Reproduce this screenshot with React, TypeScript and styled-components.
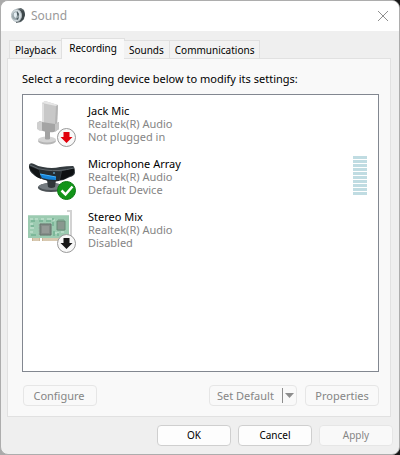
import React from "react";
import styled, { createGlobalStyle } from "styled-components";

const GlobalStyle = createGlobalStyle`
  * { box-sizing: border-box; }
  html, body, #root { height: 100%; }
  body {
    margin: 0;
    background: linear-gradient(90deg, #aaaaaa 0 90%, #181818 98%);
    font-family: "Noto Sans", "Open Sans", sans-serif;
    font-size: 11px;
    line-height: 13px;
    color: #000;
  }
  button { font: inherit; color: inherit; }
`;

const Dialog = styled.main`
  display: flex;
  flex-direction: column;
  min-height: 100%;
  border: 1px solid #adadad;
  border-radius: 8px;
  background: #efefef;
  overflow: hidden;
`;

const TitleBar = styled.header`
  display: flex;
  align-items: center;
  height: 30px;
  padding: 0 8px 0 10px;
  background: #fff;
`;

const Title = styled.h1`
  flex: 1;
  margin: 0 0 0 6px;
  font-size: 12px;
  line-height: 16px;
  font-weight: 400;
  color: #999;
`;

const CloseButton = styled.button`
  display: flex;
  padding: 2px;
  border: 0;
  background: none;
`;

const Content = styled.div`
  flex: 1;
  display: flex;
  flex-direction: column;
  padding: 7px 8px 0 6px;
`;

const TabList = styled.div`
  display: flex;
  align-items: flex-end;
  padding-left: 2px;
`;

const Tab = styled.button<{ $active?: boolean }>`
  position: relative;
  height: ${(p) => (p.$active ? 21 : 18)}px;
  margin: ${(p) => (p.$active ? "0 -1px -1px" : "0")};
  padding: ${(p) => (p.$active ? "0 7px 2px" : "1px 5px 0")};
  border: 1px solid #e0e0e0;
  border-bottom: 0;
  border-left-width: ${(p) => (p.$active ? 1 : 0)}px;
  background: ${(p) => (p.$active ? "#f9f9f9" : "#f2f2f2")};
  font-size: 10px;
  white-space: nowrap;
  &:first-child { border-left-width: 1px; }
`;

const Panel = styled.section`
  flex: 1;
  display: flex;
  flex-direction: column;
  padding: 13px 11px 10px 14px;
  border: 1px solid #e1e1e1;
  background: #f9f9f9;
`;

const Prompt = styled.p`
  margin: 0 0 9px;
`;

const DeviceList = styled.ul`
  flex: 1;
  margin: 0;
  padding: 5px 11px 5px 5px;
  border: 1px solid #828790;
  background: #fff;
  list-style: none;
`;

const Device = styled.li`
  display: flex;
  align-items: flex-start;
  gap: 12px;
  height: 53px;
`;

const DeviceText = styled.div`
  flex: 1;
  padding-top: 4px;
`;

const DeviceName = styled.div`
  color: #000;
`;

const DeviceDetail = styled.div`
  color: #858585;
`;

const Meter = styled.div`
  display: grid;
  gap: 1px;
  width: 14px;
  margin-top: 3px;
`;

const MeterBar = styled.span`
  height: 3px;
  background: #c0dce2;
`;

const Actions = styled.div`
  display: flex;
  gap: 8px;
  padding: 13px 0 0 1px;
`;

const Spacer = styled.span`
  flex: 1;
`;

const Button = styled.button`
  width: 74px;
  height: 21px;
  padding: 0;
  border: 1px solid #cfcfcf;
  border-radius: 4px;
  background: #fdfdfd;
  &:disabled {
    border-color: #e6e6e6;
    background: #f9f9f9;
    color: #858585;
  }
`;

const ConfigureButton = styled(Button)`
  padding-right: 2px;
`;

const SplitButton = styled(Button)`
  display: flex;
  align-items: center;
  justify-content: space-between;
  width: 88px;
  padding: 0 2px 0 7px;
`;

const FooterButton = styled(Button)`
  font-size: 10px;
`;

const Footer = styled.footer`
  display: flex;
  justify-content: flex-end;
  gap: 7px;
  padding: 8px 6px;
`;

const SpeakerIcon = () => (
  <svg width="14" height="16" viewBox="0 0 14 16" aria-hidden="true">
    <path d="M5 1 10 0l3 2 1 4-1 5-3 3-5 1z" fill="#5c666a" />
    <path d="M9 2q4 4 0 11l3-1 2-5-1-4z" fill="#3d474a" />
    <ellipse cx="5.500" cy="7.500" rx="5" ry="6" fill="#d6dfe3" stroke="#b2bcc0" />
    <path d="M3 4q4-2 5 2 1 4-3 6Q1 12 1 8q0-3 2-4" fill="#9aa7ac" />
    <path d="M3 5q3-2 3 2l-1 3Q2 9 3 5" fill="#e3edf2" />
    <path d="m6 3 2 3-1 3-1-3zM5 11l3-2-1 3z" fill="#4b5a60" />
  </svg>
);

const DeviceSvg = ({ children }: { children: React.ReactNode }) => (
  <svg width="48" height="51" viewBox="0 -3 48 51" aria-hidden="true">{children}</svg>
);

const Badge = ({ kind }: { kind: "down" | "check" | "off" }) =>
  kind === "check" ? (
    <g>
      <circle cx="38.500" cy="34.500" r="9" fill="#129419" stroke="#0b7a12" />
      <path d="m33.500 34.500 4 4 7-8" fill="none" stroke="#fff" strokeWidth="2.500" />
    </g>
  ) : (
    <g>
      <circle cx="38.500" cy="34.500" r="9" fill="#f8f8f8" stroke="#999" />
      <path d="M35.500 29h6v5h3l-6 6-6-6h3z" fill={kind === "down" ? "#e1000b" : "#171717"} />
    </g>
  );

const JackMicIcon = () => (
  <DeviceSvg>
    <ellipse cx="19" cy="38" rx="9" ry="3.500" fill="#b5b5b5" />
    <ellipse cx="19" cy="36.500" rx="9" ry="3" fill="#d4d4d4" />
    <path d="M17 28h5v8q-3 1-5 0z" fill="#a2a2a2" />
    <path d="m14 0 3-2 13 4-1 20-15-2z" fill="#c8c8c8" />
    <path d="m14 0 3-2 13 4-2 1z" fill="#e6e6e6" />
    <path d="m14 0 2 1v19h-2z" fill="#e0e0e0" />
    <path d="m28 3 2-1-1 20-2-1z" fill="#b4b4b4" />
    <path d="m9 20 3-2 2 1 13 2 4-2v7l-5 3q-7 1-14-2l-3-3z" fill="#a4a4a4" />
    <path d="m9 20 3-2 2 1v8l-2 1-3-2z" fill="#cfcfcf" />
    <path d="m27 21 4-2v7l-4 3z" fill="#c4c4c4" />
    <Badge kind="down" />
  </DeviceSvg>
);

const MicArrayIcon = () => (
  <DeviceSvg>
    <ellipse cx="23" cy="31.500" rx="13" ry="4.500" fill="#4c5256" />
    <ellipse cx="23" cy="30.500" rx="12" ry="3.500" fill="#747b80" />
    <path d="M19 24h9l-1 7q-4 2-7 0z" fill="#30363a" />
    <path d="M1 9q1-3 5-1 5 3 9 3 9 2 17 0 7-1 13-1 2 1 2 7-1 3-5 4-5 3-12 4-9 1-16-2Q5 20 2 15q-1-3-1-6" fill="#343b3f" />
    <path d="m1 10 10 4 2 9q-5-2-8-6-4-4-4-7" fill="#111416" />
    <path d="m34 15 12-3q1 7-4 8-4 3-10 4z" fill="#0d1012" />
    <path d="m11 13 22 3-2 9q-9 1-17-2z" fill="#252c31" />
    <path d="m12 18 16 3v3q-8 0-14-2z" fill="#1683d8" />
    <path d="m12 18 16 3" stroke="#44b5ff" />
    <path d="M2 9q9 5 16 5 12 2 28-2" fill="none" stroke="#626a70" />
    <path d="M25 17h2" stroke="#74c5f8" />
    <Badge kind="check" />
  </DeviceSvg>
);

const SoundCardIcon = () => (
  <DeviceSvg>
    <path d="M39 2h4v31" fill="none" stroke="#d2d2d2" strokeWidth="2" />
    <path d="M0 6h41v21l-4 2H0z" fill="#9ccbb1" />
    <path d="M0 6h41v1H0z" fill="#b4d7c4" />
    <path d="M4 29h8v3H4zm10 0h20v3H14z" fill="#c9b597" />
    <path d="M6 29v3m2-3v3m2-3v3m6-3v3m2-3v3m2-3v3m2-3v3m2-3v3m2-3v3m2-3v3m2-3v3" stroke="#e6dcc9" />
    <path d="M10 16h14M10 19h14M10 22h14M10 25h14M13 14v13M16 14v13M19 14v13M22 14v13" stroke="#a2b5ab" />
    <path d="M12 15h11v11H12z" fill="#858c88" stroke="#65756c" />
    <path d="M14 17h7v7h-7z" fill="#949a96" />
    <path d="M29 12h8v9h-8z" fill="#89988f" stroke="#688a76" />
    <path d="M31 10v12m2-12v12m2-12v12" stroke="#789c87" strokeDasharray="2 8" />
    <path d="M2 10h3m2 0h3m3 0h3m3 0h5M2 15h3m-3 4h4m-4 4h3m22 1h4m2-1h3M25 11h2" stroke="#d0eadb" />
    <path d="M3 12h4m4 0h4m3 0h5M3 17h3m-3 9h5m17-13v4m1 5v5m4-3v3M25 9v2" stroke="#5fa482" />
    <Badge kind="off" />
  </DeviceSvg>
);

const devices = [
  { name: "Jack Mic", status: "Not plugged in", Icon: JackMicIcon },
  { name: "Microphone Array", status: "Default Device", Icon: MicArrayIcon, meter: true },
  { name: "Stereo Mix", status: "Disabled", Icon: SoundCardIcon },
];
const tabs = ["Playback", "Recording", "Sounds", "Communications"];

export default function App() {
  return (
    <>
      <GlobalStyle />
      <Dialog role="dialog" aria-labelledby="title">
        <TitleBar>
          <SpeakerIcon />
          <Title id="title">Sound</Title>
          <CloseButton aria-label="Close">
            <svg width="12" height="12" viewBox="0 0 12 12" aria-hidden="true">
              <path d="m1 1 10 10M11 1 1 11" stroke="#8f8f8f" />
            </svg>
          </CloseButton>
        </TitleBar>
        <Content>
          <TabList role="tablist">
            {tabs.map((tab) => (
              <Tab key={tab} role="tab" $active={tab === "Recording"} aria-selected={tab === "Recording"}>{tab}</Tab>
            ))}
          </TabList>
          <Panel role="tabpanel" aria-label="Recording">
            <Prompt>Select a recording device below to modify its settings:</Prompt>
            <DeviceList>
              {devices.map(({ name, status, Icon, meter }) => (
                <Device key={name}>
                  <Icon />
                  <DeviceText>
                    <DeviceName>{name}</DeviceName>
                    <DeviceDetail>Realtek(R) Audio</DeviceDetail>
                    <DeviceDetail>{status}</DeviceDetail>
                  </DeviceText>
                  {meter && (
                    <Meter role="img" aria-label="Input level">
                      {Array.from({ length: 10 }, (_, i) => <MeterBar key={i} />)}
                    </Meter>
                  )}
                </Device>
              ))}
            </DeviceList>
            <Actions>
              <ConfigureButton disabled>Configure</ConfigureButton>
              <Spacer />
              <SplitButton disabled>
                Set Default
                <svg width="13" height="15" viewBox="0 0 13 15" aria-hidden="true">
                  <path d="M1.500 0v15" stroke="#8d8d8d" />
                  <path d="M4 5h9L8.500 10z" fill="#8d8d8d" />
                </svg>
              </SplitButton>
              <Button disabled>Properties</Button>
            </Actions>
          </Panel>
        </Content>
        <Footer>
          <FooterButton>OK</FooterButton>
          <FooterButton>Cancel</FooterButton>
          <FooterButton disabled>Apply</FooterButton>
        </Footer>
      </Dialog>
    </>
  );
}
